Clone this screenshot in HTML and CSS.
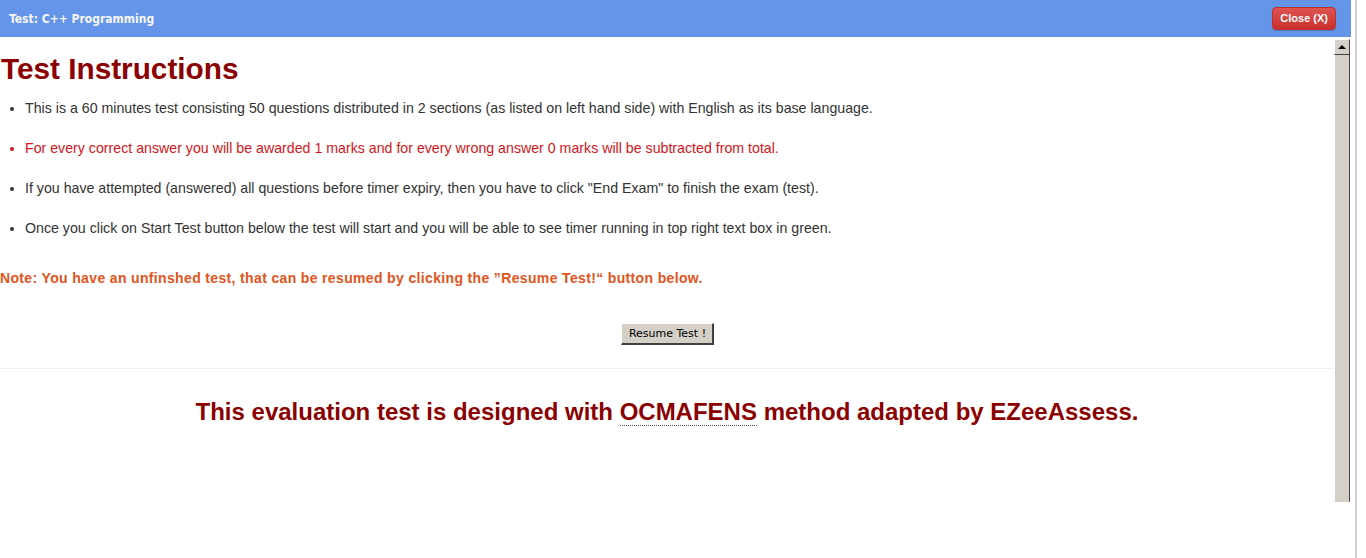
FILE: index.html
```html
<!DOCTYPE html>
<html>
<head>
<meta charset="utf-8">
<link rel="stylesheet" href="styles.css">
</head>
<body>
<div class="page">
  <div class="dialog">
    <div class="titlebar">
      <span class="title">Test: C++ Programming</span>
      <span class="close">Close (X)</span>
    </div>
    <div class="frame">
      <div class="content">
        <h1 class="heading">Test Instructions</h1>
        <ul class="rules">
          <li>This is a 60 minutes test consisting 50 questions distributed in 2 sections (as listed on left hand side) with English as its base language.</li>
          <li class="red">For every correct answer you will be awarded 1 marks and for every wrong answer 0 marks will be subtracted from total.</li>
          <li>If you have attempted (answered) all questions before timer expiry, then you have to click "End Exam" to finish the exam (test).</li>
          <li>Once you click on Start Test button below the test will start and you will be able to see timer running in top right text box in green.</li>
        </ul>
        <p class="note">Note: You have an unfinshed test, that can be resumed by clicking the ”Resume Test!“ button below.</p>
        <div class="actions"><span class="btn">Resume Test !</span></div>
        <hr class="sep">
        <p class="footer">This evaluation test is designed with <abbr class="abbr">OCMAFENS</abbr> method adapted by EZeeAssess.</p>
      </div>
      <div class="scrollbar">
        <div class="arrow"><span class="tri"></span></div>
        <div class="thumb"></div>
      </div>
    </div>
  </div>
  <div class="edge"><div class="line"></div></div>
</div>
</body>
</html>
```
FILE: styles.css
```css
html, body {
  margin: 0;
  padding: 0;
  background: #fff;
}
.page {
  display: flex;
  width: 1366px;
  height: 558px;
  overflow: hidden;
}
.dialog {
  width: 1351px;
  display: flex;
  flex-direction: column;
}
.titlebar {
  height: 37px;
  background: #6595e9;
  display: flex;
  align-items: center;
  justify-content: space-between;
  padding: 0 15px 0 9px;
  box-sizing: border-box;
}
.title {
  font-family: "DejaVu Sans Condensed", "DejaVu Sans", sans-serif;
  font-weight: bold;
  font-size: 12px;
  color: #f4f6fb;
}
.close {
  font-family: "Liberation Sans", Arial, sans-serif;
  font-weight: bold;
  font-size: 11px;
  color: #fff;
  background: linear-gradient(#de5350, #c8302c);
  border: 1px solid #b93430;
  border-radius: 4px;
  padding: 4px 7px 5px 7px;
  line-height: 12px;
  box-shadow: 0 1px 1px rgba(0,0,0,0.2);
}
.frame {
  display: flex;
  height: 464px;
}
.content {
  width: 1334px;
  font-family: "Liberation Sans", Arial, sans-serif;
}
.heading {
  margin: 15px 0 0 1px;
  font-size: 29.75px;
  line-height: 34px;
  color: #8b0000;
  font-weight: bold;
}
.rules {
  margin: 14px 0 0 0;
  padding: 0 0 0 25px;
  list-style: disc;
}
.rules li {
  font-size: 14.2px;
  line-height: 16px;
  color: #333;
  margin-bottom: 24px;
}
.rules li.red {
  color: #d4161a;
}
.note {
  margin: 34px 0 0 0;
  font-size: 14px;
  font-weight: bold;
  letter-spacing: 0.35px;
  line-height: 16px;
  color: #e2541c;
}
.actions {
  display: flex;
  justify-content: center;
  margin-top: 37px;
  padding-left: 1px;
}
.btn {
  font-family: "DejaVu Sans", Tahoma, sans-serif;
  font-size: 11px;
  color: #000;
  background: #d4d0c8;
  border-top: 1px solid #fff;
  border-left: 1px solid #fff;
  border-right: 2px solid #404040;
  border-bottom: 2px solid #404040;
  padding: 3px 6px 2px 7px;
  line-height: 14px;
}
.sep {
  margin: 23px 0 0 0;
  border: 0;
  border-top: 1px solid #eee;
  height: 0;
}
.footer {
  margin: 29px 0 0 0;
  text-align: center;
  font-size: 24px;
  font-weight: bold;
  line-height: 28px;
  color: #8b0000;
}
.abbr {
  text-decoration: none;
  border-bottom: 1px dotted #555;
}
.scrollbar {
  width: 16px;
  height: 463px;
  margin-top: 2px;
  display: flex;
  flex-direction: column;
}
.arrow {
  height: 14px;
  background: #d4d0c8;
  border-top: 1px solid #fff;
  border-left: 1px solid #fff;
  border-right: 1px solid #404040;
  border-bottom: 1px solid #404040;
  display: flex;
  align-items: center;
  justify-content: center;
}
.tri {
  width: 0;
  height: 0;
  border-left: 4px solid transparent;
  border-right: 4px solid transparent;
  border-bottom: 4px solid #000;
}
.thumb {
  flex: 1;
  background: #d4d0c8;
  border-left: 1px solid #fff;
  border-right: 1px solid #404040;
  border-bottom: 1px solid #d4d0c8;
}
.edge {
  width: 15px;
  display: flex;
}
.line {
  margin-left: 4px;
  width: 2px;
  background: #d0d0d0;
}
```
